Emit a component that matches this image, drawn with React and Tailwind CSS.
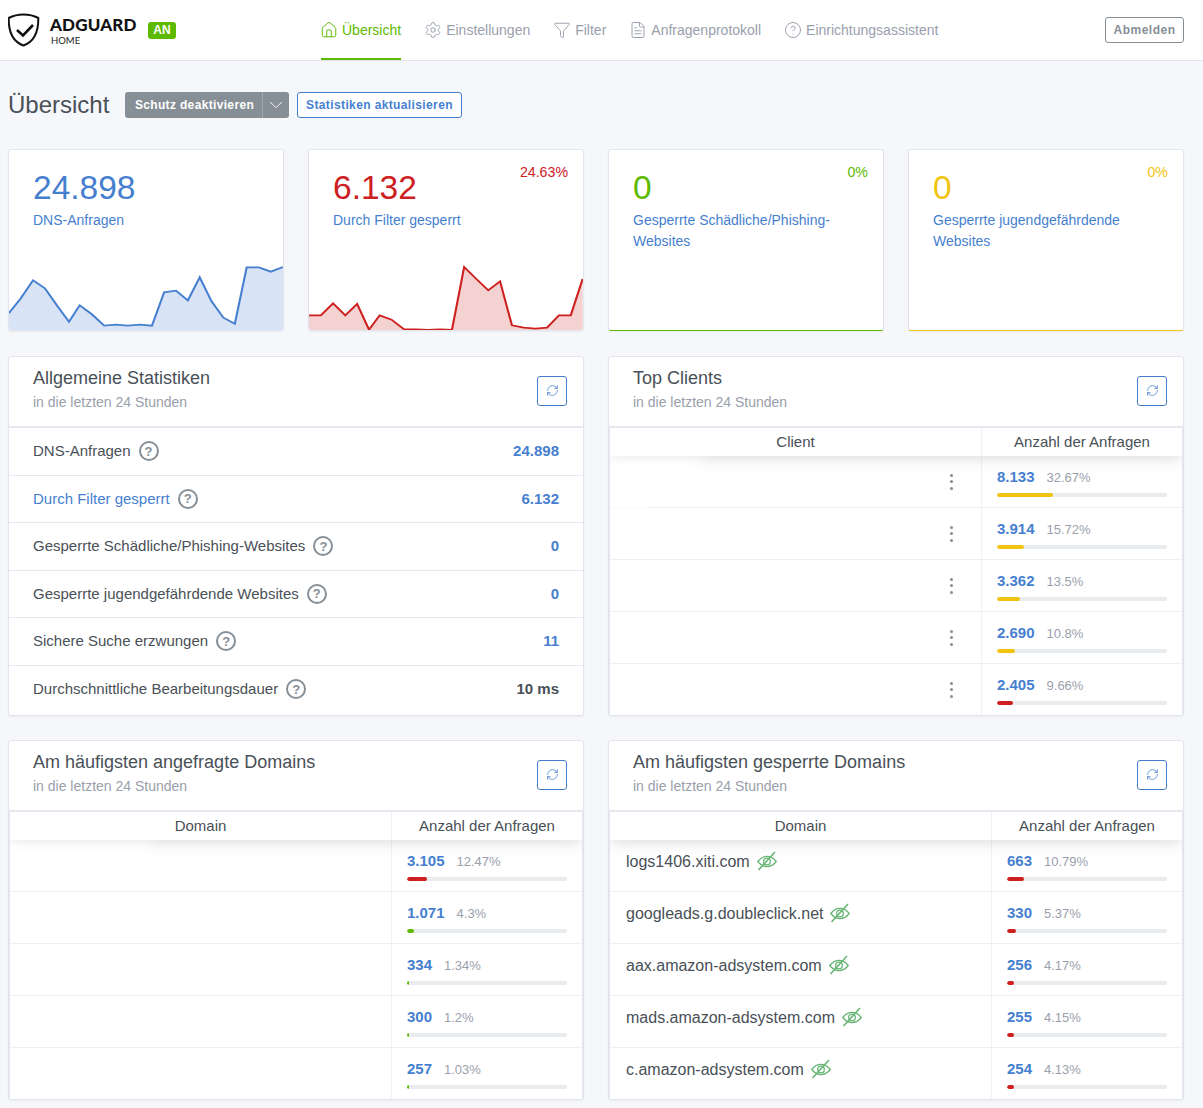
import { Filter, FileText, House, RefreshCw, Settings, CircleHelp, ChevronDown } from 'lucide-react';

const BLUE_POINTS = '23,520 53,477 86,422 117,446 150,500 180,546 208,497 239,523 272,558 303,555 334,558 365,555 397,558 429,458 460,453 491,482 522,413 553,485 584,534 614,552 645,383 677,383 708,396 740,382';
const RED_POINTS = '807,527 838,527 870,491 902,527 933,493 964,570 992,527 1023,540 1056,569 1087,569 1118,571 1150,569 1181,571 1213,382 1245,418 1276,452 1307,425 1338,557 1369,564 1400,567 1430,564 1461,527 1492,527 1523,418';

const YELLOW = 'bg-[#f1c40f]';
const RED = 'bg-[#cd201f]';
const GREEN = 'bg-[#5eba00]';

const NAV = [
  { label: 'Einstellungen', icon: Settings },
  { label: 'Filter', icon: Filter },
  { label: 'Anfragenprotokoll', icon: FileText },
  { label: 'Einrichtungsassistent', icon: CircleHelp },
];

const GENERAL = [
  { label: 'DNS-Anfragen', value: '24.898' },
  { label: 'Durch Filter gesperrt', value: '6.132', link: true },
  { label: 'Gesperrte Schädliche/Phishing-Websites', value: '0' },
  { label: 'Gesperrte jugendgefährdende Websites', value: '0' },
  { label: 'Sichere Suche erzwungen', value: '11' },
  { label: 'Durchschnittliche Bearbeitungsdauer', value: '10 ms', dark: true },
];

const CLIENTS = [
  { count: '8.133', pct: '32.67%', width: 32.67, color: YELLOW },
  { count: '3.914', pct: '15.72%', width: 15.72, color: YELLOW },
  { count: '3.362', pct: '13.5%', width: 13.5, color: YELLOW },
  { count: '2.690', pct: '10.8%', width: 10.8, color: YELLOW },
  { count: '2.405', pct: '9.66%', width: 9.66, color: RED },
];

const QUERIED = [
  { count: '3.105', pct: '12.47%', width: 12.47, color: RED },
  { count: '1.071', pct: '4.3%', width: 4.3, color: GREEN },
  { count: '334', pct: '1.34%', width: 1.34, color: GREEN },
  { count: '300', pct: '1.2%', width: 1.2, color: GREEN },
  { count: '257', pct: '1.03%', width: 1.03, color: GREEN },
];

const BLOCKED = [
  { domain: 'logs1406.xiti.com', count: '663', pct: '10.79%', width: 10.79, color: RED },
  { domain: 'googleads.g.doubleclick.net', count: '330', pct: '5.37%', width: 5.37, color: RED },
  { domain: 'aax.amazon-adsystem.com', count: '256', pct: '4.17%', width: 4.17, color: RED },
  { domain: 'mads.amazon-adsystem.com', count: '255', pct: '4.15%', width: 4.15, color: RED },
  { domain: 'c.amazon-adsystem.com', count: '254', pct: '4.13%', width: 4.13, color: RED },
];

function Logo() {
  return (
    <div className="flex items-center w-[313px] shrink-0">
      <svg width="32" height="34" viewBox="8 13 32 34" fill="none" stroke="#111" className="shrink-0">
        <path d="M23.5 14.5C18 14.5 12.5 16 8.7 18C8.5 30 11 41 23.5 45.5C36 41 38.5 30 38.3 18C34.5 16 29 14.5 23.5 14.5Z" strokeWidth="2" strokeLinejoin="round" />
        <path d="M17 30L23 35.5L33 25" strokeWidth="2.6" />
      </svg>
      <div className="ml-[10px] w-[98px]">
        <div className="font-['Lato'] font-black text-[17px] leading-[18px] text-[#111] tracking-[0.15px] mt-[2px]">ADGUARD</div>
        <div className="font-['Lato'] text-[9.5px] leading-[11px] text-[#222] mt-[1px] pl-px">HOME</div>
      </div>
      <span className="bg-[#5eba00] text-white rounded-[3px] w-[28px] h-[17px] flex items-center justify-center text-[12px] font-bold">AN</span>
    </div>
  );
}

function Header() {
  return (
    <header className="h-[61px] bg-white border-b border-[#e0e3eb] flex items-center pl-2 pr-[19px]">
      <Logo />
      <nav className="flex items-stretch gap-6 h-[60px] text-[14px] text-[#9aa0ac]">
        <a className="flex items-center gap-[6px] text-[#5eba00] border-b-2 border-[#5eba00] pt-[2px]">
          <House size={18} strokeWidth={1.3} className="-mx-[1.5px]" />
          Übersicht
        </a>
        {NAV.map(({ label, icon: Icon }) => (
          <a key={label} className="flex items-center gap-[6px] border-b-2 border-transparent pt-[2px]">
            <Icon size={18} strokeWidth={1.3} className="-mx-[1.5px]" />
            {label}
          </a>
        ))}
      </nav>
      <button className="ml-auto w-[79px] h-[26px] border border-[#868e96] rounded-[3px] text-[#868e96] text-[12px] font-bold tracking-[0.5px]">
        Abmelden
      </button>
    </header>
  );
}

function TopCard({ value, label, percent, color, children, line }) {
  return (
    <div className={`relative h-[182px] bg-white border border-[#e2e5ee] rounded-[3px] shadow-[0_1px_2px_rgba(0,0,0,0.05)] flex flex-col overflow-hidden ${line || ''}`}>
      <div className="px-6 pt-[20px]">
        <div className={`text-[33.5px] leading-[36px] ${color}`}>{value}</div>
        <div className="text-[14px] leading-[21px] text-[#467fcf] mt-[4px]">{label}</div>
      </div>
      {percent && <span className={`absolute top-[12px] right-[15px] text-[14.2px] leading-5 ${color}`}>{percent}</span>}
      {children}
    </div>
  );
}

function Chart({ points, start, stroke, fill }) {
  const last = points.split(' ').pop().split(',')[0];
  return (
    <svg viewBox={`${start} 370 717 204`} preserveAspectRatio="none" className="mt-auto -mb-px w-full h-[68px] block shrink-0">
      <polygon points={`${start},574 ${points} ${last},574`} fill={fill} />
      <polyline points={points} fill="none" stroke={stroke} strokeWidth="5.5" />
    </svg>
  );
}

function Panel({ title, children }) {
  return (
    <section className="bg-white border border-[#e2e5ee] rounded-[3px] shadow-[0_1px_2px_rgba(0,0,0,0.05)] overflow-hidden">
      <div className="h-[69px] pl-6 pr-4 flex items-center justify-between">
        <div className="-mt-[5px]">
          <h2 className="text-[18px] leading-[22px] text-[#495057]">{title}</h2>
          <p className="text-[14px] leading-5 text-[#9aa0ac] mt-[3px]">in die letzten 24 Stunden</p>
        </div>
        <button className="w-[30px] h-[30px] -mt-[2px] border border-[#467fcf] rounded-[3px] flex items-center justify-center text-[#467fcf]">
          <RefreshCw size={13} strokeWidth={1.4} />
        </button>
      </div>
      {children}
    </section>
  );
}

function HelpMark() {
  return (
    <span className="w-5 h-5 rounded-full border-2 border-[#868e96] text-[#868e96] flex items-center justify-center text-[13px] font-bold leading-none shrink-0">
      ?
    </span>
  );
}

function GeneralStats() {
  return (
    <div className="border-t-2 border-[#e6e8f0]">
      {GENERAL.map((row, i) => (
        <div
          key={row.label}
          className={`h-[47.5px] px-6 flex items-center justify-between text-[15px] ${i < GENERAL.length - 1 ? 'border-b border-[#e6e8f0]' : ''}`}
        >
          <span className={`flex items-center gap-2 ${row.link ? 'text-[#467fcf]' : 'text-[#495057]'}`}>
            {row.label}
            <HelpMark />
          </span>
          <span className={`font-bold ${row.dark ? 'text-[#495057]' : 'text-[#467fcf]'}`}>{row.value}</span>
        </div>
      ))}
    </div>
  );
}

function EyeOff() {
  return (
    <svg width="20" height="20" viewBox="0 0 20 20" fill="none" stroke="#66b574" strokeWidth="1.3" className="shrink-0">
      <path d="M0.8 10.5C3.5 7 6.5 5.4 10 5.4C13.5 5.4 16.5 7 19.2 10.5C16.5 14 13.5 15.6 10 15.6C6.5 15.6 3.5 14 0.8 10.5Z" />
      <circle cx="10" cy="10.5" r="3.3" />
      <path d="M1.5 19L18 1" strokeWidth="1.6" />
    </svg>
  );
}

function Kebab() {
  return (
    <span className="flex flex-col gap-[3.5px] mr-[28px]">
      <i className="block w-[3px] h-[3px] rounded-full bg-[#868e96]" />
      <i className="block w-[3px] h-[3px] rounded-full bg-[#868e96]" />
      <i className="block w-[3px] h-[3px] rounded-full bg-[#868e96]" />
    </span>
  );
}

function DataTable({ heading, rows, countWidth, kebab, blobs }) {
  return (
    <div className="relative border-x border-[#e2e5ee] border-t-2 border-t-[#e6e8f0] overflow-hidden">
      <div className="relative z-10 h-[28px] bg-white flex text-[15px] leading-[28px] text-[#495057] text-center shadow-[0_2px_15px_rgba(0,0,0,0.15)]">
        <div className="flex-1 border-r border-[#f0f1f5]">{heading}</div>
        <div className={`shrink-0 ${countWidth}`}>Anzahl der Anfragen</div>
      </div>
      {rows.map((row, i) => (
        <div key={row.count} className={`flex ${i < rows.length - 1 ? 'h-[52px] border-b border-[#eeeff3]' : 'h-[51px]'}`}>
          <div className={`flex-1 border-r border-[#f0f1f5] flex ${kebab ? 'items-center justify-end' : 'pl-4 pt-[11px] gap-[7px] text-[16px] leading-[22px] text-[#495057]'}`}>
            {kebab && <Kebab />}
            {row.domain && (
              <>
                <span>{row.domain}</span>
                <EyeOff />
              </>
            )}
          </div>
          <div className={`shrink-0 px-[15px] pt-[11px] ${countWidth}`}>
            <div className="leading-5 flex items-baseline gap-3">
              <span className="text-[15px] font-bold text-[#467fcf]">{row.count}</span>
              <span className="text-[13px] text-[#9aa0ac]">{row.pct}</span>
            </div>
            <div className="h-1 mt-[5px] rounded-[2px] bg-[#e9ecef] overflow-hidden">
              <div className={`h-full rounded-[2px] ${row.color}`} style={{ width: `${row.width}%` }} />
            </div>
          </div>
        </div>
      ))}
      {blobs}
    </div>
  );
}

export default function App() {
  return (
    <div className="min-h-[1108px] bg-[#f5f7fb] font-['Liberation_Sans',Arial,sans-serif]">
      <Header />
      <main className="pl-2 pr-[19px] pt-[31px] pb-2">
        <div className="flex items-center h-[26px]">
          <h1 className="text-[24px] text-[#495057] w-[117px] leading-none">Übersicht</h1>
          <div className="flex h-[26px] bg-[#868e96] rounded-[3px] text-white text-[12px] font-bold tracking-[0.34px]">
            <button className="w-[138px] pl-[2px] text-center border-r border-[#a0a6ac]">Schutz deaktivieren</button>
            <span className="w-[26px] flex items-center justify-center">
              <ChevronDown size={22} strokeWidth={1} />
            </span>
          </div>
          <button className="ml-2 w-[165px] h-[26px] bg-white border border-[#467fcf] rounded-[3px] text-[#467fcf] text-[12px] font-bold tracking-[0.38px]">
            Statistiken aktualisieren
          </button>
        </div>

        <div className="grid grid-cols-4 gap-6 mt-[31px]">
          <TopCard value="24.898" label="DNS-Anfragen" color="text-[#467fcf]">
            <Chart points={BLUE_POINTS} start={23} stroke="#467fcf" fill="#d8e4f5" />
          </TopCard>
          <TopCard value="6.132" label="Durch Filter gesperrt" percent="24.63%" color="text-[#cd201f]">
            <Chart points={RED_POINTS} start={807} stroke="#cd201f" fill="#f4d2d2" />
          </TopCard>
          <TopCard value="0" label="Gesperrte Schädliche/Phishing-Websites" percent="0%" color="text-[#5eba00]" line="border-b-[#5eba00]" />
          <TopCard value="0" label="Gesperrte jugendgefährdende Websites" percent="0%" color="text-[#f1c40f]" line="border-b-[#f1c40f]" />
        </div>

        <div className="grid grid-cols-2 gap-x-6 gap-y-6 mt-[25px]">
          <Panel title="Allgemeine Statistiken">
            <GeneralStats />
          </Panel>
          <Panel title="Top Clients">
            <DataTable
              heading="Client"
              rows={CLIENTS}
              countWidth="w-[200px]"
              kebab
              blobs={
                <>
                  <div className="absolute -left-[8px] top-[30px] w-[100px] h-[18px] bg-white blur-[8px] z-20" />
                  <div className="absolute left-0 top-[76px] w-[40px] h-[6px] bg-white blur-[3px] z-20" />
                </>
              }
            />
          </Panel>
          <Panel title="Am häufigsten angefragte Domains">
            <DataTable
              heading="Domain"
              rows={QUERIED}
              countWidth="w-[190px]"
              blobs={<div className="absolute -left-[8px] top-[32px] w-[150px] h-[14px] bg-white blur-[7px] z-20" />}
            />
          </Panel>
          <Panel title="Am häufigsten gesperrte Domains">
            <DataTable heading="Domain" rows={BLOCKED} countWidth="w-[190px]" />
          </Panel>
        </div>
      </main>
    </div>
  );
}
